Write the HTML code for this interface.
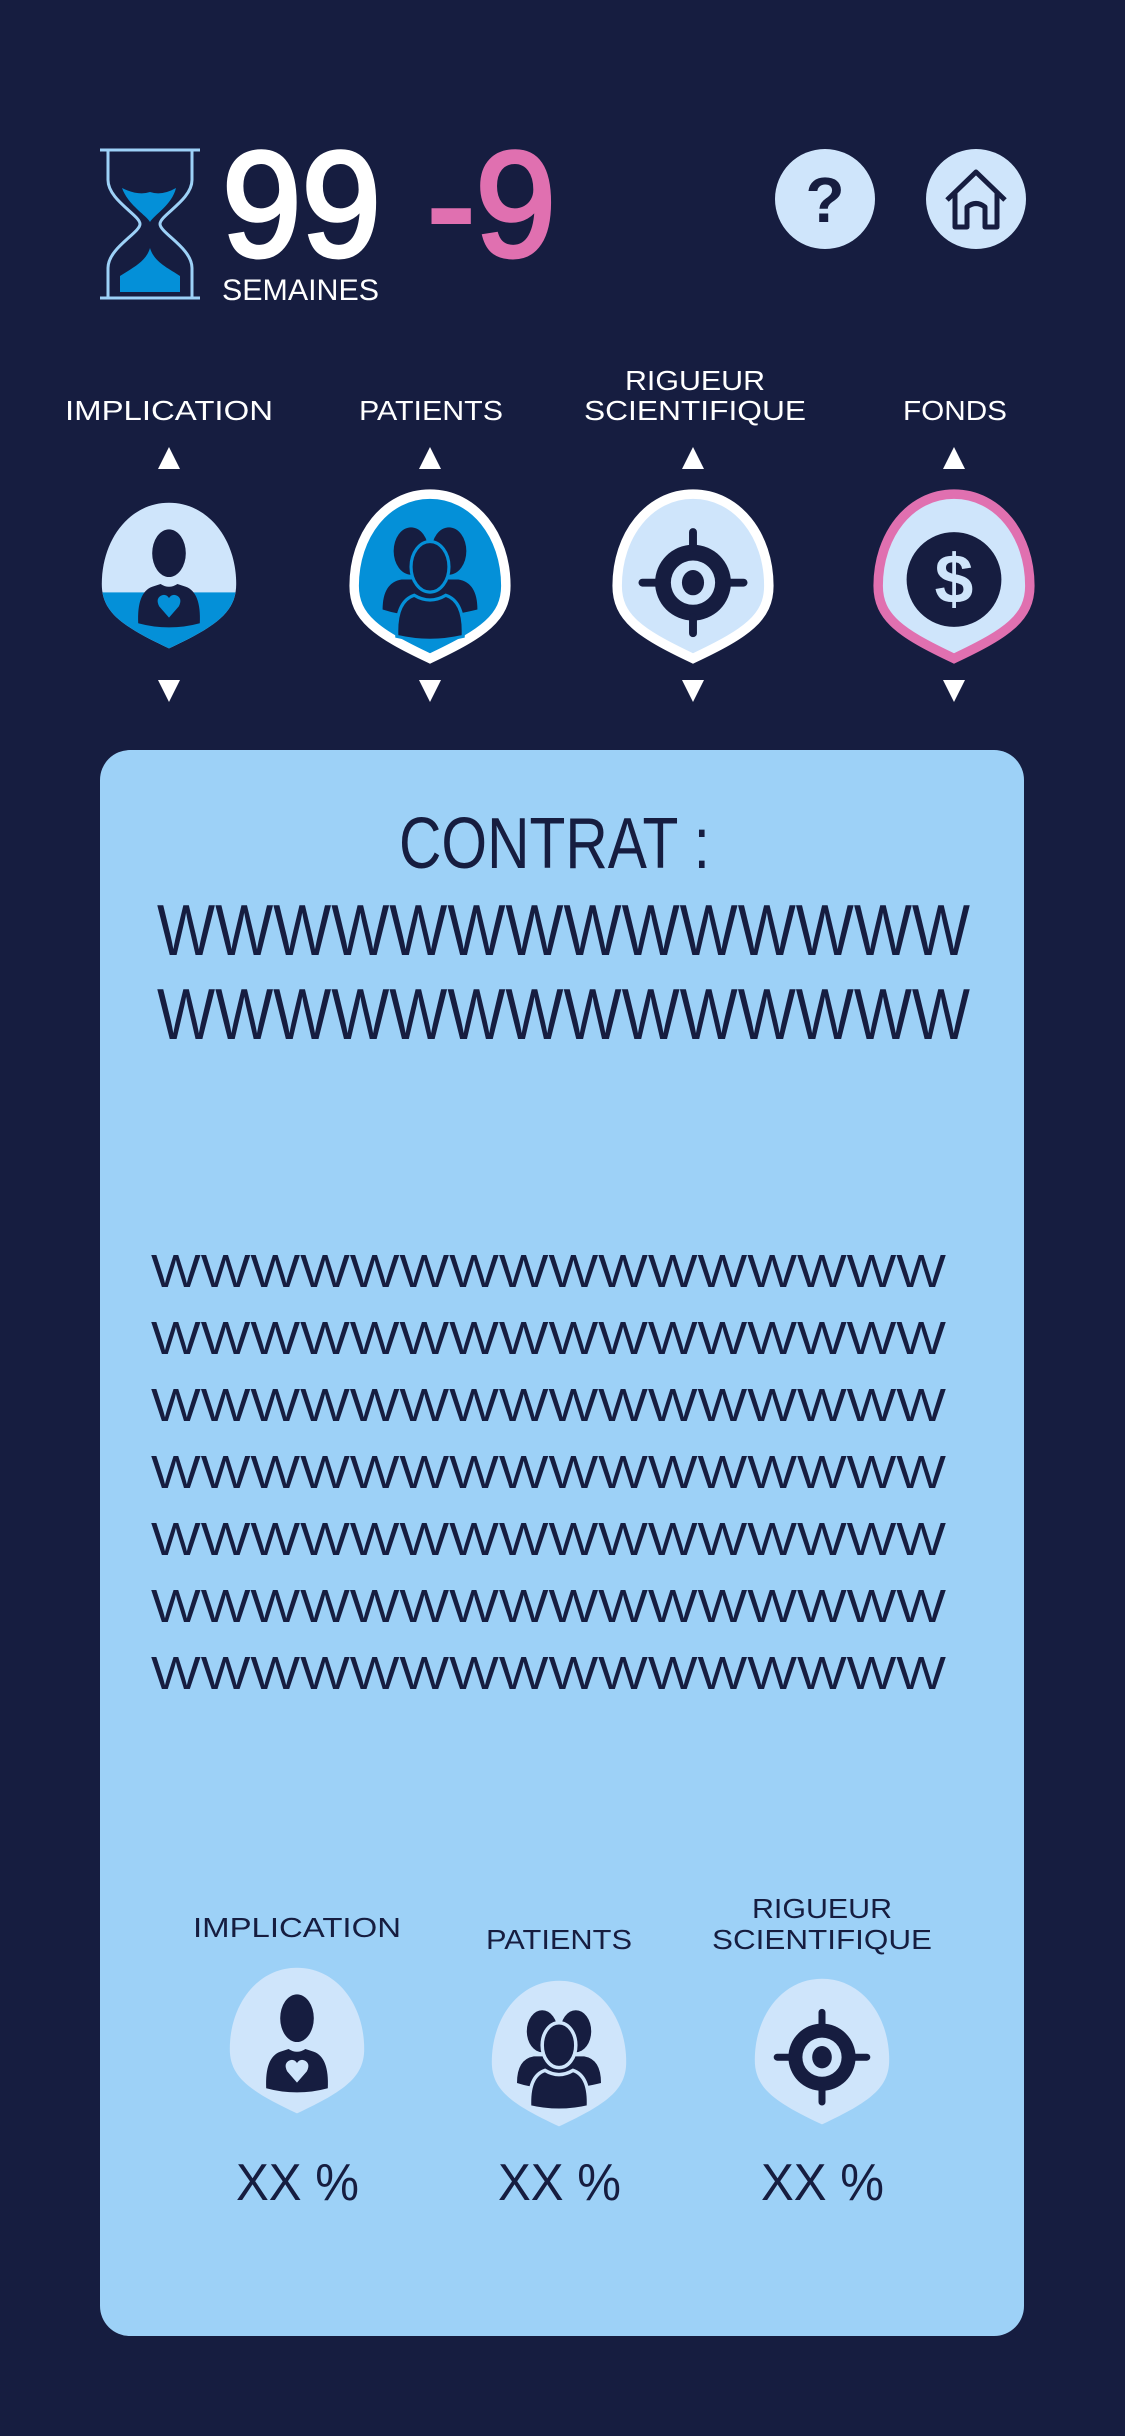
<!DOCTYPE html>
<html><head><meta charset="utf-8"><style>
html,body{margin:0;padding:0;background:#161d40;width:1125px;height:2436px;overflow:hidden}
svg{display:block}
text{font-family:"Liberation Sans",sans-serif}
</style></head><body>
<svg width="1125" height="2436" viewBox="0 0 1125 2436" xmlns="http://www.w3.org/2000/svg">
<defs>
<path id="pin" d="M50 2 C78 2 98 28 98 60 C98 80 84 90 50 106 C16 90 2 80 2 60 C2 28 22 2 50 2Z"/>
<clipPath id="pc"><use href="#pin"/></clipPath>
<g id="person">
<ellipse cx="50" cy="38" rx="12" ry="17" fill="#161d40"/>
<path d="M28 88 Q27 66 38 62 L44 60 Q50 64 56 60 L62 62 Q73 66 72 88 Q50 94 28 88Z" fill="#161d40"/>
</g>
<g id="target">
<circle cx="50" cy="58" r="24" fill="#161d40"/>
<circle cx="50" cy="58" r="14" fill="#cfe5fb"/>
<ellipse cx="50" cy="58" rx="7" ry="8" fill="#161d40"/>
<path d="M50 26V36M50 80V90M18 58H28M72 58H82" stroke="#161d40" stroke-width="5" stroke-linecap="round"/>
</g>
<g id="group">
<ellipse cx="38" cy="38" rx="11" ry="15" fill="#161d40"/>
<ellipse cx="62" cy="38" rx="11" ry="15" fill="#161d40"/>
<path d="M20 75 Q20 58 32 56 L68 56 Q80 58 80 75 Q60 80 50 78 Q35 80 20 75Z" fill="#161d40"/>
<ellipse cx="50" cy="48" rx="12" ry="16" fill="#161d40" stroke="#cfe5fb" stroke-width="2.5"/>
<path d="M29 92 Q28 70 40 66 Q50 72 60 66 Q72 70 71 92 Q50 97 29 92Z" fill="#161d40" stroke="#cfe5fb" stroke-width="2.5"/>
</g>
</defs>

<g fill="none" stroke="#9dd1f7" stroke-width="3">
<path d="M100 150H200M100 298H200"/>
<path d="M108 150V180 C108 200 140 215 140 224 C140 233 108 248 108 268V298"/>
<path d="M192 150V180 C192 200 160 215 160 224 C160 233 192 248 192 268V298"/>
</g>
<path d="M122 188 Q138 196 150 192 Q162 196 176 188 C172 205 154 215 150 222 C146 215 128 205 122 188Z" fill="#0490d8"/>
<path d="M150 248 C154 262 168 268 180 276 V292 H120 V276 C132 268 146 262 150 248Z" fill="#0490d8"/>

<text x="222" y="256" font-size="150" fill="#fff" stroke="#fff" stroke-width="4" textLength="159" lengthAdjust="spacingAndGlyphs">99</text>
<text x="427" y="256" font-size="150" fill="#e070b0" stroke="#e070b0" stroke-width="4" textLength="129" lengthAdjust="spacingAndGlyphs">-9</text>
<text x="222" y="300" font-size="30" fill="#fff" textLength="157" lengthAdjust="spacingAndGlyphs">SEMAINES</text>

<circle cx="825" cy="199" r="50" fill="#cfe5fb"/>
<text x="825" y="222" font-size="64" font-weight="bold" fill="#161d40" text-anchor="middle">?</text>
<circle cx="976" cy="199" r="50" fill="#cfe5fb"/>
<path d="M947 200 L976 172 L1005 200 M955 193 V227 H967 V207 Q976 200 985 207 V227 H997 V193" fill="none" stroke="#161d40" stroke-width="5" stroke-linejoin="round"/>

<g fill="#fff" font-size="28">
<text x="65" y="420" textLength="208" lengthAdjust="spacingAndGlyphs">IMPLICATION</text>
<text x="359" y="420" textLength="144" lengthAdjust="spacingAndGlyphs">PATIENTS</text>
<text x="625" y="390" textLength="140" lengthAdjust="spacingAndGlyphs">RIGUEUR</text>
<text x="584" y="420" textLength="222" lengthAdjust="spacingAndGlyphs">SCIENTIFIQUE</text>
<text x="903" y="420" textLength="104" lengthAdjust="spacingAndGlyphs">FONDS</text>
</g>
<g fill="#fff">
<path d="M158 469L169 447L180 469Z M419 469L430 447L441 469Z M682 469L693 447L704 469Z M943 469L954 447L965 469Z"/>
<path d="M158 680L169 702L180 680Z M419 680L430 702L441 680Z M682 680L693 702L704 680Z M943 680L954 702L965 680Z"/>
</g>

<g transform="translate(99,500) scale(1.4)">
<use href="#pin" fill="#cfe5fb"/>
<rect x="0" y="66" width="100" height="50" fill="#0490d8" clip-path="url(#pc)"/>
<use href="#person"/>
<path d="M50 84 L43 76 Q40 70 45 68 Q48 67 50 70 Q52 67 55 68 Q60 70 57 76Z" fill="#0490d8"/>
</g>
<g transform="translate(351,491) scale(1.58)">
<use href="#pin" fill="#0490d8" stroke="#fff" stroke-width="6"/>
<ellipse cx="38" cy="38" rx="11" ry="15" fill="#161d40"/>
<ellipse cx="62" cy="38" rx="11" ry="15" fill="#161d40"/>
<path d="M20 75 Q20 58 32 56 L68 56 Q80 58 80 75 Q60 80 50 78 Q35 80 20 75Z" fill="#161d40"/>
<ellipse cx="50" cy="48" rx="12" ry="16" fill="#161d40" stroke="#0490d8" stroke-width="2"/>
<path d="M29 92 Q28 70 40 66 Q50 72 60 66 Q72 70 71 92 Q50 97 29 92Z" fill="#161d40" stroke="#0490d8" stroke-width="2"/>
</g>
<g transform="translate(614,491) scale(1.58)">
<use href="#pin" fill="#cfe5fb" stroke="#fff" stroke-width="6"/>
<use href="#target"/>
</g>
<g transform="translate(875,491) scale(1.58)">
<use href="#pin" fill="#cfe5fb" stroke="#e070b0" stroke-width="6"/>
<circle cx="50" cy="56" r="30" fill="#161d40"/>
<text x="50" y="71" font-size="44" font-weight="bold" fill="#cfe5fb" text-anchor="middle">$</text>
</g>

<rect x="100" y="750" width="924" height="1586" rx="30" fill="#9dd1f7"/>
<g fill="#161d40">
<text x="399" y="868" font-size="72" textLength="311" lengthAdjust="spacingAndGlyphs">CONTRAT :</text>
<text x="157" y="955" font-size="72" textLength="813" lengthAdjust="spacingAndGlyphs">WWWWWWWWWWWWWW</text>
<text x="157" y="1039" font-size="72" textLength="813" lengthAdjust="spacingAndGlyphs">WWWWWWWWWWWWWW</text>
<g font-size="46">
<text x="151" y="1287" textLength="795" lengthAdjust="spacingAndGlyphs">WWWWWWWWWWWWWWWW</text>
<text x="151" y="1354" textLength="795" lengthAdjust="spacingAndGlyphs">WWWWWWWWWWWWWWWW</text>
<text x="151" y="1421" textLength="795" lengthAdjust="spacingAndGlyphs">WWWWWWWWWWWWWWWW</text>
<text x="151" y="1488" textLength="795" lengthAdjust="spacingAndGlyphs">WWWWWWWWWWWWWWWW</text>
<text x="151" y="1555" textLength="795" lengthAdjust="spacingAndGlyphs">WWWWWWWWWWWWWWWW</text>
<text x="151" y="1622" textLength="795" lengthAdjust="spacingAndGlyphs">WWWWWWWWWWWWWWWW</text>
<text x="151" y="1689" textLength="795" lengthAdjust="spacingAndGlyphs">WWWWWWWWWWWWWWWW</text>
</g>
<g font-size="28">
<text x="193" y="1937" textLength="208" lengthAdjust="spacingAndGlyphs">IMPLICATION</text>
<text x="486" y="1949" textLength="146" lengthAdjust="spacingAndGlyphs">PATIENTS</text>
<text x="752" y="1918" textLength="140" lengthAdjust="spacingAndGlyphs">RIGUEUR</text>
<text x="712" y="1949" textLength="220" lengthAdjust="spacingAndGlyphs">SCIENTIFIQUE</text>
</g>
<g font-size="52">
<text x="236" y="2200" textLength="123" lengthAdjust="spacingAndGlyphs">XX %</text>
<text x="498" y="2200" textLength="123" lengthAdjust="spacingAndGlyphs">XX %</text>
<text x="761" y="2200" textLength="123" lengthAdjust="spacingAndGlyphs">XX %</text>
</g>
</g>
<g transform="translate(227,1965) scale(1.4)">
<use href="#pin" fill="#cfe5fb"/>
<use href="#person"/>
<path d="M50 84 L43 76 Q40 70 45 68 Q48 67 50 70 Q52 67 55 68 Q60 70 57 76Z" fill="#cfe5fb"/>
</g>
<g transform="translate(489,1978) scale(1.4)">
<use href="#pin" fill="#cfe5fb"/>
<use href="#group"/>
</g>
<g transform="translate(752,1976) scale(1.4)">
<use href="#pin" fill="#cfe5fb"/>
<use href="#target"/>
</g>
</svg>
</body></html>
